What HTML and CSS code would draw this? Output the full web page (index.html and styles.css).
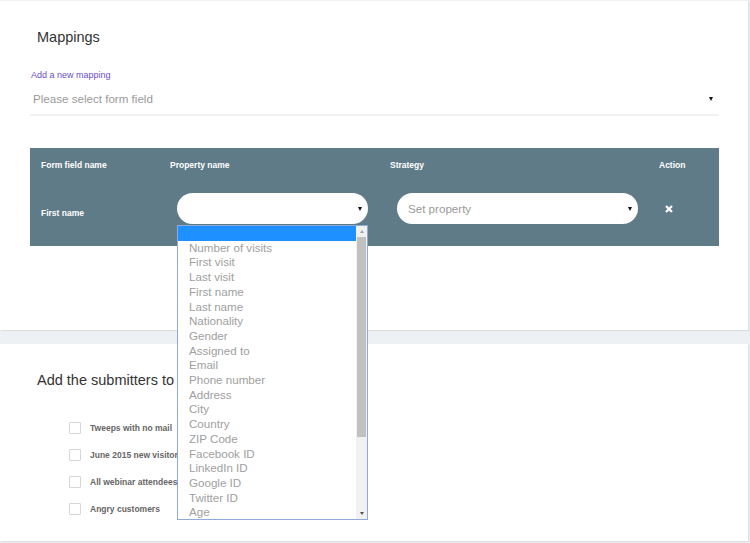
FILE: index.html
```html
<!DOCTYPE html>
<html>
<head>
<meta charset="utf-8">
<link rel="stylesheet" href="styles.css">
</head>
<body>
<div class="page">
  <section class="card card-mappings">
    <h2 class="card-title">Mappings</h2>
    <a class="add-link">Add a new mapping</a>
    <div class="field-select">
      <span class="placeholder">Please select form field</span>
      <span class="caret"></span>
    </div>

    <div class="map-table">
      <div class="th">Form field name</div>
      <div class="th">Property name</div>
      <div class="th">Strategy</div>
      <div class="th">Action</div>

      <div class="td td-name">First name</div>
      <div class="td td-prop">
        <div class="pill pill-prop"><span class="caret"></span></div>
        <div class="listbox">
          <ul class="options">
            <li class="selected">&nbsp;</li>
            <li>Number of visits</li>
            <li>First visit</li>
            <li>Last visit</li>
            <li>First name</li>
            <li>Last name</li>
            <li>Nationality</li>
            <li>Gender</li>
            <li>Assigned to</li>
            <li>Email</li>
            <li>Phone number</li>
            <li>Address</li>
            <li>City</li>
            <li>Country</li>
            <li>ZIP Code</li>
            <li>Facebook ID</li>
            <li>LinkedIn ID</li>
            <li>Google ID</li>
            <li>Twitter ID</li>
            <li>Age</li>
          </ul>
          <div class="scrollbar">
            <span class="sb-up"></span>
            <div class="sb-track"><div class="sb-thumb"></div></div>
            <span class="sb-down"></span>
          </div>
        </div>
      </div>
      <div class="td">
        <div class="pill pill-strategy"><span class="pill-text">Set property</span><span class="caret"></span></div>
      </div>
      <div class="td td-action">
        <svg class="remove" width="8" height="8" viewBox="0 0 8 8"><path d="M1 1L7 7M7 1L1 7" stroke="#fff" stroke-width="2.2" stroke-linecap="butt"/></svg>
      </div>
    </div>
  </section>

  <section class="card card-lists">
    <h2 class="card-title">Add the submitters to lists</h2>
    <ul class="checks">
      <li><span class="box"></span><span class="check-label">Tweeps with no mail</span></li>
      <li><span class="box"></span><span class="check-label">June 2015 new visitors</span></li>
      <li><span class="box"></span><span class="check-label">All webinar attendees</span></li>
      <li><span class="box"></span><span class="check-label">Angry customers</span></li>
    </ul>
  </section>
</div>
</body>
</html>
```

FILE: styles.css
```css
html, body {
  margin: 0;
  padding: 0;
}
body {
  background: #edf1f4;
  font-family: "Liberation Sans", Arial, sans-serif;
  width: 750px;
  height: 543px;
  overflow: hidden;
}
.page {
  padding-top: 1px;
}
.card {
  width: 748px;
  background: #fff;
  box-sizing: border-box;
  box-shadow: 1px 1px 1px rgba(0, 0, 0, 0.07);
}
.card-mappings {
  height: 329px;
  padding: 28px 29px 0 30px;
}
.card-lists {
  margin-top: 14px;
  height: 197px;
  padding: 28px 29px 0 30px;
}
.card-title {
  margin: 0 0 0 7px;
  font-size: 14.5px;
  line-height: 17px;
  font-weight: normal;
  color: #333;
}
.add-link {
  display: block;
  margin: 24px 0 0 1px;
  font-size: 9px;
  line-height: 11px;
  color: #6a4fcb;
}
.field-select {
  display: flex;
  align-items: center;
  justify-content: space-between;
  height: 35px;
  box-sizing: border-box;
  padding: 2px 6px 0 3px;
  border-bottom: 2px solid #eff1f3;
}
.placeholder {
  font-size: 11.6px;
  color: #9a9a9a;
}
.caret {
  width: 0;
  height: 0;
  border-left: 2.5px solid transparent;
  border-right: 2.5px solid transparent;
  border-top: 4px solid #111;
}
.map-table {
  margin-top: 32px;
  background: #607b88;
  display: grid;
  grid-template-columns: 129px 220px 269px auto;
  grid-template-rows: 11px 31px;
  row-gap: 22px;
  padding: 12px 0 22px 11px;
}
.th {
  font-size: 8.5px;
  line-height: 11px;
  font-weight: bold;
  color: #fff;
}
.td {
  font-size: 8.5px;
  line-height: 11px;
  font-weight: bold;
  color: #fff;
}
.td-name {
  padding-top: 14.5px;
}
.td-prop {
  position: relative;
}
.pill {
  margin-left: 7px;
  height: 31px;
  background: #fff;
  border-radius: 16px;
  display: flex;
  align-items: center;
  justify-content: space-between;
  box-sizing: border-box;
  padding: 0 6px 0 11px;
}
.pill-prop {
  width: 191px;
  justify-content: flex-end;
}
.pill-strategy {
  width: 241px;
}
.pill-text {
  font-size: 11.6px;
  font-weight: normal;
  color: #9a9a9a;
}
.td-action {
  display: flex;
  align-items: center;
  padding-left: 6px;
}
.listbox {
  position: absolute;
  z-index: 10;
  left: 7px;
  top: 32px;
  width: 191px;
  height: 295px;
  box-sizing: border-box;
  border: 1px solid #8fa9d9;
  background: #fff;
  display: flex;
}
.options {
  flex: 1;
  list-style: none;
  margin: 0;
  padding: 0;
  overflow: hidden;
}
.options li {
  font-size: 11.6px;
  line-height: 14.7px;
  font-weight: normal;
  color: #a0a0a0;
  padding-left: 11px;
  white-space: nowrap;
}
.options li.selected {
  background: #1e90ff;
}
.scrollbar {
  width: 11px;
  background: #f1f1f1;
  display: flex;
  flex-direction: column;
  align-items: center;
}
.sb-up, .sb-down {
  width: 0;
  height: 0;
  border-left: 2.5px solid transparent;
  border-right: 2.5px solid transparent;
  margin: 4px 0 4px;
}
.sb-up {
  border-bottom: 3px solid #a3a3a3;
}
.sb-down {
  border-top: 3px solid #505050;
}
.sb-track {
  flex: 1;
  width: 100%;
  display: flex;
  justify-content: center;
}
.sb-thumb {
  width: 9px;
  height: 200px;
  background: #c1c1c1;
}
.checks {
  list-style: none;
  margin: 33px 0 0 39px;
  padding: 0;
  display: flex;
  flex-direction: column;
  gap: 15px;
}
.checks li {
  display: flex;
  align-items: center;
  height: 12px;
}
.box {
  width: 12px;
  height: 12px;
  box-sizing: border-box;
  border: 1px solid #d3d7db;
  border-radius: 1px;
  background: #fff;
}
.check-label {
  margin-left: 9px;
  font-size: 8.5px;
  font-weight: bold;
  color: #666;
}
```
